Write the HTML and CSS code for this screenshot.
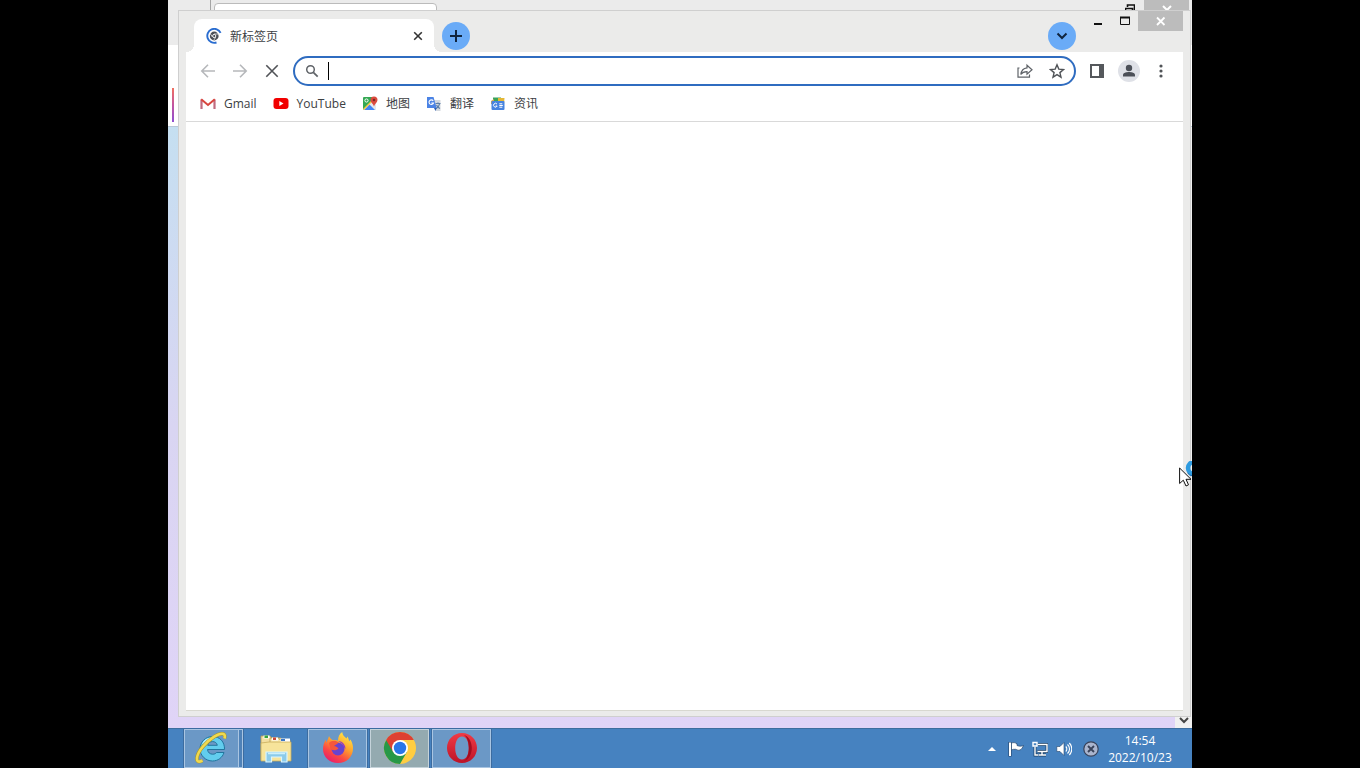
FILE: index.html
```html
<!DOCTYPE html>
<html lang="zh-CN">
<head>
    <meta charset="UTF-8">
    <meta name="viewport" content="width=device-width, initial-scale=1.0">
    <title>新标签页</title>
    <link rel="stylesheet" href="styles.css">
</head>
<body>
    <div class="screen">
        <main class="desktop">
            <!-- window behind -->
            <div class="back-window">
                <div class="back-titlebar">
                    <div class="back-pin"></div>
                    <div class="back-tab"></div>
                    <div class="back-controls">
                        <svg class="back-restore" viewBox="0 0 10 9" width="10" height="9"><path d="M2.5 3V1H9.5V7H8M0 4.5H7.5V9M.5 4V9" fill="none" stroke="#111" stroke-width="1.6"/></svg>
                        <span class="back-close"><svg viewBox="0 0 10 10" width="10" height="10"><path d="M1 1l8 8M9 1L1 9" stroke="#fff" stroke-width="2"/></svg></span>
                    </div>
                </div>
                <div class="back-toolbar"><span class="back-accent"></span></div>
                <div class="back-page">
                    <div class="back-scroll"><svg viewBox="0 0 10 7" width="10" height="7"><path d="M1 1l4 4 4-4" fill="none" stroke="#444" stroke-width="2"/></svg></div>
                </div>
            </div>

            <section class="window">
                <header class="titlebar">
                    <div class="tab">
                        <svg viewBox="0 0 16 16" width="16" height="16">
                            <path d="M14.6 4.8A7 7 0 1 0 10.5 14.5" fill="none" stroke="#2a6dd0" stroke-width="1.9"/>
                            <circle cx="8.2" cy="8" r="4.4" fill="#4a4f57"/>
                            <path d="M8 6H12M6.4 9L4.4 5.8M9.8 9L7.8 12.2" stroke="#fff" stroke-width=".7"/>
                            <circle cx="8.2" cy="8" r="1.6" fill="#4a4f57" stroke="#fff" stroke-width=".9"/>
                        </svg>
                        <span class="tab-title">新标签页</span>
                        <button class="tab-close" aria-label="关闭标签页"><svg viewBox="0 0 10 10" width="10" height="10"><path d="M1.2 1.2l7.6 7.6M8.8 1.2L1.2 8.8" stroke="#333" stroke-width="1.6"/></svg></button>
                    </div>
                    <button class="round-btn" aria-label="新标签页"><svg viewBox="0 0 14 14" width="14" height="14"><path d="M7 1v12M1 7h12" stroke="#10243e" stroke-width="2"/></svg></button>
                    <button class="round-btn search-tabs" aria-label="搜索标签页"><svg viewBox="0 0 12 8" width="12" height="8"><path d="M1.5 1.5L6 6l4.5-4.5" fill="none" stroke="#10243e" stroke-width="2"/></svg></button>
                    <div class="captions">
                        <button class="caption" aria-label="最小化"><svg viewBox="0 0 10 10" width="10" height="10"><path d="M1 8h8" stroke="#111" stroke-width="2"/></svg></button>
                        <button class="caption" aria-label="最大化"><svg viewBox="0 0 10 10" width="10" height="10"><path d="M.5 1.5H9.5V8.5H.5z" fill="none" stroke="#111"/><path d="M0 1.5h10" stroke="#111" stroke-width="2"/></svg></button>
                        <button class="caption caption-close" aria-label="关闭"><svg viewBox="0 0 10 10" width="10" height="10"><path d="M1 1.5l7.5 7.5M8.5 1.5L1 9" stroke="#fff" stroke-width="1.8"/></svg></button>
                    </div>
                </header>

                <div class="toolbar">
                    <button class="icon-btn" aria-label="后退"><svg viewBox="0 0 16 16" width="16" height="16"><path d="M15 8H2M8 1.8L1.8 8 8 14.2" fill="none" stroke="#b6b8bb" stroke-width="1.6"/></svg></button>
                    <button class="icon-btn" aria-label="前进"><svg viewBox="0 0 16 16" width="16" height="16"><path d="M1 8h13M8 1.8L14.2 8 8 14.2" fill="none" stroke="#b6b8bb" stroke-width="1.6"/></svg></button>
                    <button class="icon-btn" aria-label="停止加载"><svg viewBox="0 0 16 16" width="16" height="16"><path d="M2.3 2.3l11.4 11.4M13.7 2.3L2.3 13.7" stroke="#505357" stroke-width="1.6"/></svg></button>
                    <div class="omnibox">
                        <svg viewBox="0 0 14 14" width="14" height="14"><circle cx="5.5" cy="5.5" r="3.8" fill="none" stroke="#5f6368" stroke-width="1.5"/><path d="M8.3 8.3l4.4 4.4" stroke="#5f6368" stroke-width="1.7"/></svg>
                        <span class="caret"></span>
                        <input class="address" type="text" aria-label="地址和搜索栏">
                        <button class="icon-btn" aria-label="分享"><svg viewBox="0 0 16 16" width="16" height="16"><path d="M2.5 5H1V14.2H12.5V11.5M10 2.2L15 6.8 10 11.2V8.7C7.5 8.7 5.2 9.5 3.8 11.5 4.3 8 6.5 5.3 10 4.9z" fill="none" stroke="#5f6368" stroke-width="1.2"/></svg></button>
                        <button class="icon-btn" aria-label="为此标签页添加书签"><svg viewBox="0 0 16 16" width="16" height="16"><path d="M8 1.8L9.8 6.1 14.5 6.5 10.9 9.6 12 14.2 8 11.7 4 14.2 5.1 9.6 1.5 6.5 6.2 6.1z" fill="none" stroke="#505357" stroke-width="1.4"/></svg></button>
                    </div>
                    <button class="icon-btn" aria-label="侧边栏"><svg viewBox="0 0 14 14" width="14" height="14"><path d="M1 1h12v12H1z" fill="none" stroke="#55585c" stroke-width="2"/><path d="M9 0h5v14H9z" fill="#55585c"/></svg></button>
                    <button class="icon-btn" aria-label="用户"><svg viewBox="0 0 22 22" width="22" height="22"><circle cx="11" cy="11" r="11" fill="#dfe1e7"/><circle cx="11" cy="8" r="3.2" fill="#4c5058"/><path d="M5 16.5V15C5 12.8 8.5 12 11 12s6 .8 6 3v1.5z" fill="#4c5058"/></svg></button>
                    <button class="icon-btn" aria-label="菜单"><svg viewBox="0 0 4 14" width="4" height="14"><g fill="#505357"><circle cx="2" cy="2" r="1.6"/><circle cx="2" cy="7" r="1.6"/><circle cx="2" cy="12" r="1.6"/></g></svg></button>
                </div>

                <nav class="bookmarks">
                    <a href="#gmail">
                        <svg viewBox="0 0 16 16" width="16" height="16"><path d="M1.5 13V3.5M14.5 13V3.5" stroke="#c06c80" stroke-width="2.2"/><path d="M1.2 3.2L8 9l6.8-5.8" fill="none" stroke="#d8453e" stroke-width="2"/></svg>
                        <span>Gmail</span>
                    </a>
                    <a href="#youtube">
                        <svg viewBox="0 0 16 16" width="16" height="16"><rect x=".5" y="2" width="15" height="11" rx="3" fill="#f10000"/><path d="M6.3 5.1v4.8L10.5 7.5z" fill="#fff"/></svg>
                        <span>YouTube</span>
                    </a>
                    <a href="#maps">
                        <svg viewBox="0 0 16 16" width="16" height="16"><rect x="1" y="1" width="13" height="13" rx="1" fill="#34a853"/><path d="M1 14L13 2h1v12H2z" fill="#e5e8ec"/><path d="M2 14l5.5-5.5L13 14z" fill="#4285f4"/><path d="M1.5 13.5L10 5" stroke="#fbc943" stroke-width="1.5"/><circle cx="4.5" cy="4.5" r="1.6" fill="none" stroke="#fff"/><path d="M12 10.5c-.5-2.5-3.5-4-3.5-6.5a3.5 3.5 0 0 1 7 0c0 2.5-3 4-3.5 6.5z" fill="#dc4b3e"/><circle cx="12" cy="4" r="1.3" fill="#7c2920"/></svg>
                        <span>地图</span>
                    </a>
                    <a href="#translate">
                        <svg viewBox="0 0 16 16" width="16" height="16"><path d="M6 4h8.5v11H9.5z" fill="#d5dae0"/><path d="M9.5 7.5h5M12 6.5v1M13.7 7.5c-.5 2.5-2 4-3.5 5M10.5 9c1 1.8 2 2.8 3.5 3.5" fill="none" stroke="#5b7fa8" stroke-width="1.2"/><path d="M1 1h6.5l3.2 11H1z" fill="#4b83e5"/><path d="M7.2 4.8A2.3 2.3 0 1 0 7.5 7H5.3" fill="none" stroke="#fff" stroke-width="1.1"/><path d="M8 12h2.7L9.5 15z" fill="#2c5fb3"/></svg>
                        <span>翻译</span>
                    </a>
                    <a href="#news">
                        <svg viewBox="0 0 16 16" width="16" height="16"><path d="M3 1.5h8v6H3z" fill="#39a35a"/><path d="M8 2h6.5L14 8H8z" fill="#e5b735"/><path d="M1 5l3-2v5H1z" fill="#d9a54c"/><rect x="1.5" y="5" width="13" height="9" rx="1" fill="#4783df"/><path d="M7 8.1A1.9 1.9 0 1 0 7.2 10H5.6M9.3 7.8h3M9.3 9.5h3.5M9.3 11.2h3" fill="none" stroke="#fff"/></svg>
                        <span>资讯</span>
                    </a>
                </nav>
                <div class="page"></div>
            </section>

            <svg class="pointer" viewBox="0 0 22 26" width="22" height="26">
                <circle cx="15" cy="7" r="6" fill="none" stroke="#2f9be0" stroke-width="4.5"/>
                <path d="M8.5 12a8 8 0 0 0 5 3" fill="none" stroke="#1767a8" stroke-width="1"/>
                <path d="M.6 7V22.5L4.3 19.2 7 25 9.5 23.8 7 18.3H12z" fill="#fff" stroke="#111"/>
            </svg>
        </main>

        <footer class="taskbar">
            <div class="apps">
                <button class="app open stacked" aria-label="Internet Explorer">
                    <svg viewBox="0 0 34 34" width="34" height="34">
                        <path d="M29 21.5C27.5 26.5 23 30 17.5 30 10.5 30 5 24.5 5 17.8S10.5 5.5 17.5 5.5c7.5 0 12.3 5.5 12 13H12.5c.4 3 2.3 4.7 5.2 4.7 1.8 0 3-.6 3.7-1.7zM12.7 14.3h9.6c-.4-2.3-2.2-3.7-4.8-3.7s-4.4 1.4-4.8 3.7z" fill="#62cdee" stroke="#22769f"/>
                        <path d="M8 13C9.5 9.5 13 7.3 17.5 7.3" fill="none" stroke="#b7edfb" stroke-width="1.8"/>
                        <path d="M7.5 29.5C-1 34 1 23.5 8 15.5 15 7.5 24 1.5 28.5 3c1.5.6 1.7 2.5.9 4.5" fill="none" stroke="#a99728" stroke-width="3.6"/>
                        <path d="M7.5 29.5C-1 34 1 23.5 8 15.5 15 7.5 24 1.5 28.5 3c1.5.6 1.7 2.5.9 4.5" fill="none" stroke="#f0d950" stroke-width="2.6"/>
                    </svg>
                </button>
                <button class="app" aria-label="文件资源管理器">
                    <svg viewBox="0 0 34 34" width="34" height="34">
                        <path d="M2 5h9l1.5 2H22v22H2z" fill="#f3dfa0" stroke="#b79b54" stroke-width=".8"/>
                        <path d="M4.5 4.5h6v3h-6z" fill="#fff"/><path d="M5.5 4.5h3.5v2.5H5.5z" fill="#38a43b"/>
                        <path d="M11 7h8.5l1.5 2h10V29H11z" fill="#fae9ad" stroke="#b79b54" stroke-width=".8"/>
                        <path d="M13 6.5h6v3h-6z" fill="#fff"/><path d="M14 6.5h3v2.5h-3z" fill="#c9493b"/>
                        <path d="M21.5 7.5h9.5v3.5h-9.5z" fill="#fff"/><path d="M22 8h4v2h-4z" fill="#3b78c8"/>
                        <path d="M2 12l8-1h22v19H2z" fill="#f7e49b" stroke="#c9ad5a" stroke-width=".8"/>
                        <path d="M7 31V21h21v10h-5.5v-5h-10v5z" fill="#8ccbea" stroke="#d9f5ff" stroke-width="1.2"/>
                        <path d="M9 22.5h17" stroke="#cdf0fc" stroke-width="1.5"/>
                    </svg>
                </button>
                <button class="app open" aria-label="Firefox">
                    <svg viewBox="0 0 34 34" width="34" height="34">
                        <defs>
                            <linearGradient id="fox" x1=".8" y1="0" x2=".2" y2="1"><stop offset="0" stop-color="#fff04a"/><stop offset=".4" stop-color="#ffa22c"/><stop offset=".7" stop-color="#fb4943"/><stop offset="1" stop-color="#e51773"/></linearGradient>
                        </defs>
                        <path d="M17 32C8.5 32 2 26 2 18c0-4 1.3-7 3-9.5v3C6.5 9.5 7.5 7 8 5c1 2 2 3.5 4 4.2 2-.4 3.5-.1 5 .6 0-4 1.5-7 4.2-8.8.3 3.2 2 4.5 4.3 6.5l1-2c1 2 1.5 3.5 1.5 5l1.5-2C31.5 12 32 14.5 32 17.5 32 26 25.5 32 17 32z" fill="url(#fox)"/>
                        <circle cx="17" cy="18" r="6.5" fill="#6843cf"/>
                        <path d="M8 12c2.5-3 7-3 9.5-.8-1.2 2.3-3.5 2.5-4.5 3.8 2 0 3 1 4.5 2.5-2 2-5 2.5-8 .5z" fill="#f5573b"/>
                        <path d="M17 10c4 0 7.5 3.5 7.5 8l-2-2.5C22 13 20 11.5 17 10z" fill="#9137c5"/>
                    </svg>
                </button>
                <button class="app open active" aria-label="Google Chrome">
                    <svg viewBox="0 0 34 34" width="34" height="34">
                        <circle cx="17" cy="17" r="16" fill="#ffcd41"/>
                        <path d="M17 17L3.14 9A16 16 0 0 0 17 33l6.9-12z" fill="#279847"/>
                        <path d="M3.14 9A16 16 0 0 1 30.86 9H17v8l-6.9 4z" fill="#de4032"/>
                        <circle cx="17" cy="17" r="8" fill="#fff"/><circle cx="17" cy="17" r="6.2" fill="#2a76e8"/>
                    </svg>
                </button>
                <button class="app open" aria-label="Opera">
                    <svg viewBox="0 0 34 34" width="34" height="34">
                        <defs>
                            <linearGradient id="opera" x1="0" y1="0" x2="0" y2="1"><stop offset="0" stop-color="#f03a45"/><stop offset="1" stop-color="#bd1328"/></linearGradient>
                        </defs>
                        <path d="M17 2C8.5 2 2 8.7 2 17s6.5 15 15 15 15-6.7 15-15S25.5 2 17 2zM17 5.5c4.5 0 6.8 5.5 6.8 11.5S21.5 28.5 17 28.5 10.2 23 10.2 17 12.5 5.5 17 5.5z" fill="url(#opera)" fill-rule="evenodd"/>
                        <path d="M19 4c5 1.5 7.8 7 7.8 13S24 28.5 19 30c3.2-2 4.8-7.5 4.8-13S22.2 6 19 4z" fill="#a30d20"/>
                    </svg>
                </button>
            </div>
            <div class="tray">
                <button class="tray-btn" aria-label="显示隐藏的图标"><svg viewBox="0 0 8 5" width="8" height="5"><path d="M0 5l4-4 4 4z" fill="#fff"/></svg></button>
                <button class="tray-btn" aria-label="操作中心"><svg viewBox="0 0 16 16" width="16" height="16"><path d="M2 1V15.5" stroke="#24456c" stroke-width="3.2"/><path d="M2 1.5V15" stroke="#fff" stroke-width="2"/><path d="M3.5 2c2-.8 4-.3 5.5.8V4.5c2 .8 4 1 6.5 0-1 2-1.5 3.5-3.5 4.5-2 .8-3-.5-4.5-.7-1.5-.1-3 0-4 .7z" fill="#fff" stroke="#24456c" stroke-width=".7"/></svg></button>
                <button class="tray-btn" aria-label="网络"><svg viewBox="0 0 16 16" width="16" height="16"><path d="M6 3.5h9v7H5.5M10 10.5v3M6.5 14h7.5M3 6v8h3" fill="none" stroke="#173c63" stroke-width="2.8"/><path d="M6 3.5h9v7H5.5M10 10.5v3M6.5 14h7.5M3 6v8h3M1 1.5h4V5H1z" fill="none" stroke="#fff" stroke-width="1.4"/></svg></button>
                <button class="tray-btn" aria-label="音量"><svg viewBox="0 0 16 16" width="16" height="16"><path d="M.8 5.5H4L8 1.5v13l-4-4H.8z" fill="#fff" stroke="#24456c" stroke-width=".6"/><path d="M9.8 5.5a3.5 3.5 0 0 1 0 5M11.5 3.5a6 6 0 0 1 0 9M13.3 2a8.5 8.5 0 0 1 0 12" fill="none" stroke="#fff" stroke-width="1.1"/></svg></button>
                <button class="tray-btn status" aria-label="输入法已禁用"><svg viewBox="0 0 16 16" width="16" height="16"><circle cx="8" cy="8" r="7.2" fill="#aab5ce" stroke="#39435a" stroke-width="1.2"/><path d="M5 5l6 6M11 5l-6 6" stroke="#39435a" stroke-width="1.9"/></svg></button>
                <button class="clock"><span>14:54</span><span>2022/10/23</span></button>
            </div>
        </footer>
    </div>
</body>
</html>
```
FILE: styles.css
```css
* {
    margin: 0;
    padding: 0;
    box-sizing: border-box;
}

body {
    font-family: "Open Sans", "Noto Sans CJK SC", sans-serif;
    font-size: 12px;
    color: #3c4043;
    background: #000;
    min-height: 100vh;
    display: flex;
    justify-content: center;
    overflow: hidden;
}

button {
    display: flex;
    align-items: center;
    justify-content: center;
    border: 0;
    background: none;
    font: inherit;
    color: inherit;
}

svg {
    display: block;
    flex: none;
}

/* 4:3 display, letterboxed */
.screen {
    height: 100vh;
    aspect-ratio: 4 / 3;
    display: flex;
    flex-direction: column;
    overflow: hidden;
}

.desktop {
    position: relative;
    flex: 1;
    overflow: hidden;
}

/* window behind */
.back-window {
    height: 100%;
    display: flex;
    flex-direction: column;
}

.back-titlebar {
    height: 45px;
    display: flex;
    background: #ebebeb;
}

.back-pin {
    width: 43px;
    border-right: 1px solid #a5a5a5;
}

.back-tab {
    width: 223px;
    margin: 3px 0 0 3px;
    background: #fff;
    border: 1px solid #bbb;
    border-radius: 4px 4px 0 0;
}

.back-controls {
    display: flex;
    gap: 9px;
    margin-left: auto;
    padding-right: 3px;
}

.back-restore {
    margin-top: 4px;
}

.back-close {
    width: 45px;
    height: 10px;
    display: flex;
    justify-content: center;
    padding-top: 5px;
    background: #bcbcbc;
    overflow: hidden;
}

.back-toolbar {
    height: 82px;
    padding: 43px 4px 4px;
    background: #fff;
    border-bottom: 1px solid #b8c8d8;
}

.back-accent {
    display: block;
    width: 2px;
    height: 34px;
    background: linear-gradient(#f0705f, #c255a0, #8f4fd0);
}

.back-page {
    flex: 1;
    display: flex;
    justify-content: flex-end;
    background: linear-gradient(#c5dff1, #d9d5f2 50%, #e0d4f7);
}

.back-scroll {
    width: 17px;
    display: flex;
    align-items: flex-end;
    justify-content: center;
    padding-bottom: 4px;
    background: #f0f0f0;
}

/* browser window */
.window {
    position: absolute;
    inset: 10px 1px 11px 10px;
    display: flex;
    flex-direction: column;
    padding: 0 7px 5px;
    background: #ebebea;
    border: 1px solid #cfcfcf;
}

.titlebar {
    height: 41px;
    display: flex;
    align-items: flex-end;
    padding-left: 8px;
}

.tab {
    position: relative;
    width: 240px;
    height: 33px;
    display: flex;
    align-items: center;
    gap: 8px;
    padding: 0 8px 0 12px;
    background: #fff;
    border-radius: 8px 8px 0 0;
}

/* curved feet of the active tab */
.tab::before,
.tab::after {
    content: "";
    position: absolute;
    bottom: 0;
    width: 8px;
    height: 8px;
}

.tab::before {
    right: 100%;
    background: radial-gradient(circle at 0 0, transparent 8px, #fff 8px);
}

.tab::after {
    left: 100%;
    background: radial-gradient(circle at 100% 0, transparent 8px, #fff 8px);
}

.tab-title {
    flex: 1;
}

.tab-close {
    width: 16px;
    height: 16px;
}

.round-btn {
    width: 28px;
    height: 28px;
    margin: 0 8px 2px;
    border-radius: 50%;
    background: #6aabf7;
}

.search-tabs {
    margin-left: auto;
}

.captions {
    display: flex;
    align-self: flex-start;
}

.caption {
    width: 27px;
    height: 20px;
}

.caption-close {
    width: 45px;
    background: #bcbcbc;
}

.toolbar {
    height: 38px;
    display: flex;
    align-items: center;
    padding: 0 6px;
    background: #fff;
}

.icon-btn {
    width: 32px;
    height: 28px;
    flex: none;
}

.omnibox {
    flex: 1;
    height: 30px;
    display: flex;
    align-items: center;
    margin: 0 5px;
    padding: 0 1px 0 10px;
    border: 2px solid #2f6cc0;
    border-radius: 15px;
}

.caret {
    width: 1px;
    height: 18px;
    margin-left: 9px;
    background: #000;
}

.address {
    flex: 1;
    min-width: 0;
    border: 0;
    outline: 0;
    background: none;
    font: inherit;
    font-size: 14px;
}

.bookmarks {
    height: 32px;
    display: flex;
    align-items: center;
    gap: 16px;
    padding: 0 14px 4px;
    background: #fff;
    border-bottom: 1px solid #d9d9d9;
}

.bookmarks a {
    display: flex;
    align-items: center;
    gap: 8px;
    color: inherit;
    line-height: 16px;
    text-decoration: none;
}

.page {
    flex: 1;
    background: #fff;
    border-bottom: 1px solid #d8d8d0;
}

.pointer {
    position: absolute;
    right: -9px;
    top: 461px;
}

/* taskbar */
.taskbar {
    height: 40px;
    display: flex;
    justify-content: space-between;
    padding: 0 18px 0 16px;
    background: #4682c0;
    border-top: 1px solid #3d6d9d;
}

.apps {
    display: flex;
    gap: 3px;
}

.app {
    width: 59px;
    padding-bottom: 2px;
}

.app.open {
    background: #6b98c6;
    border: 1px solid #a9c5e2;
    outline: 1px solid #3c6ca0;
}

.app.active {
    background: #94aab0;
    border-color: #c5d3da;
}

.app.stacked {
    padding-right: 4px;
    box-shadow: inset -3px 0 #4f82b8, inset -4px 0 #a9c5e2;
}

.tray {
    display: flex;
    align-items: center;
    color: #fff;
}

.tray-btn {
    width: 24px;
    height: 24px;
}

.tray-btn.status {
    width: 30px;
}

.clock {
    flex-direction: column;
    width: 68px;
    line-height: 17px;
}
```
